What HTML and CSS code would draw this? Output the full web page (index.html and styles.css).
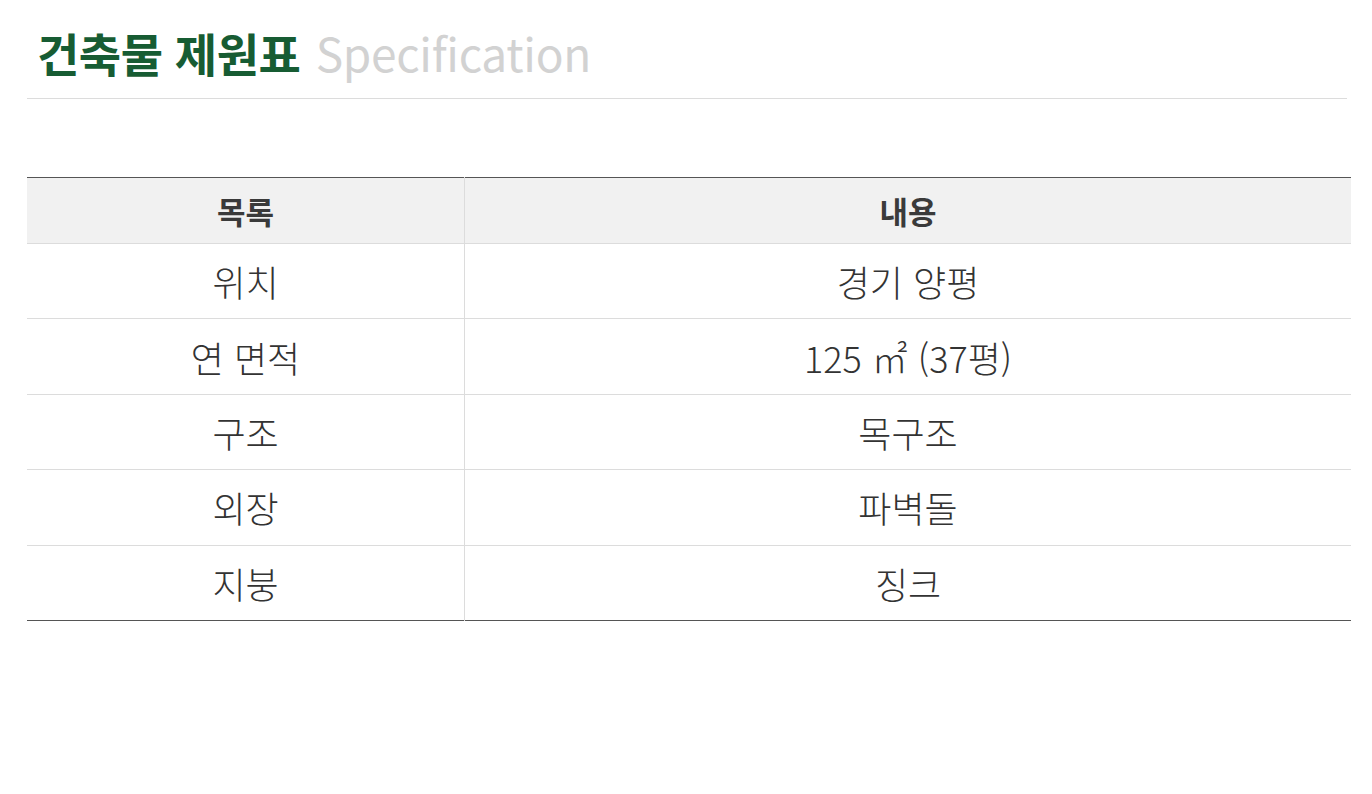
FILE: index.html
```html
<!DOCTYPE html>
<html lang="ko">
<head>
<meta charset="utf-8">
<link rel="stylesheet" href="styles.css">
</head>
<body>
<div class="page">
  <div class="title-bar">
    <h1 class="title">건축물 제원표 <span class="title-en">Specification</span></h1>
  </div>
  <table class="spec">
    <thead>
      <tr><th class="col-a">목록</th><th>내용</th></tr>
    </thead>
    <tbody>
      <tr><td>위치</td><td>경기 양평</td></tr>
      <tr><td>연 면적</td><td>125 ㎡ (37평)</td></tr>
      <tr><td>구조</td><td>목구조</td></tr>
      <tr><td>외장</td><td>파벽돌</td></tr>
      <tr><td>지붕</td><td>징크</td></tr>
    </tbody>
  </table>
</div>
</body>
</html>
```
FILE: styles.css
```css
html, body { margin: 0; padding: 0; background: #fff; }
body { font-family: "Noto Sans CJK KR", "Noto Sans", sans-serif; }
.page { padding: 19px 21px 0 27px; }
.title-bar { width: 1320px; border-bottom: 1px solid #dcdcdc; padding-bottom: 13px; }
.title { margin: 0; padding-left: 10px; font-size: 46px; line-height: 66px; font-weight: 700; color: #175c33; letter-spacing: -0.5px; }
.title-en { color: #d2d2d2; font-weight: 400; letter-spacing: -0.3px; margin-left: 3px; }
.spec { margin-top: 78px; width: 1324px; border-collapse: collapse; border-top: 1px solid #555; border-bottom: 1px solid #555; }
.spec th { background: #f1f1f1; height: 65px; font-size: 31px; font-weight: 700; color: #3a3a3a; padding: 0; }
.spec .col-a { width: 437px; }
.spec td { height: 74.4px; text-align: center; font-size: 36px; font-weight: 300; color: #333; padding: 0; border-top: 1px solid #dcdcdc; }
.spec th + th, .spec td + td { border-left: 1px solid #dcdcdc; }
```
